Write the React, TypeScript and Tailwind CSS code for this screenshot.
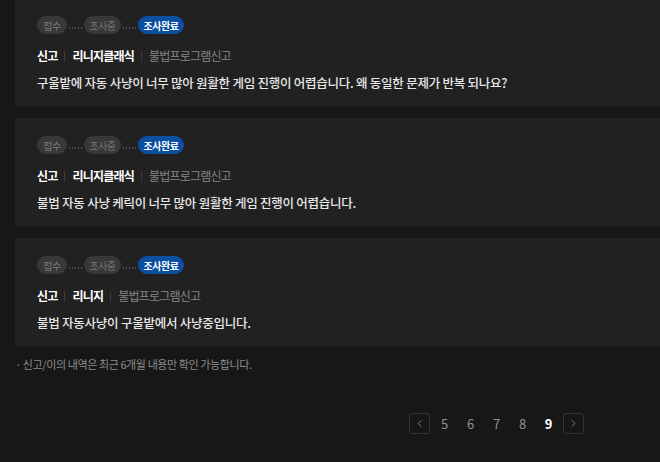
import React from 'react';
import { ChevronLeft, ChevronRight } from 'lucide-react';

interface Report {
    game: string;
    category: string;
    content: string;
}

const reports: Report[] = [
    { game: '리니지클래식', category: '불법프로그램신고', content: '구울밭에 자동 사냥이 너무 많아 원활한 게임 진행이 어렵습니다. 왜 동일한 문제가 반복 되나요?' },
    { game: '리니지클래식', category: '불법프로그램신고', content: '불법 자동 사냥 케릭이 너무 많아 원활한 게임 진행이 어렵습니다.' },
    { game: '리니지', category: '불법프로그램신고', content: '불법 자동사냥이 구울밭에서 사냥중입니다.' },
];

const Dots = () => (
    <span className="w-[17px] flex justify-center gap-[1.5px] translate-y-[3px]">
        {[0, 1, 2, 3, 4].map((i) => (
            <span key={i} className="w-[1.5px] h-[1.5px] bg-[#555]" />
        ))}
    </span>
);

const StepBadge = ({ label, width, active }: { label: string; width: string; active?: boolean }) => (
    <span
        className={
            active
                ? `${width} h-[18px] rounded-full bg-[#0b4ea2] text-white text-[10px] font-semibold tracking-[-0.5px] flex items-center justify-center`
                : `${width} h-[18px] rounded-full bg-[#383838] text-[#7a7a7a] text-[10px] tracking-[-0.5px] flex items-center justify-center`
        }
    >
        {label}
    </span>
);

const ReportCard = ({ report }: { report: Report }) => (
    <div className="bg-[#212121] pl-[22px] pt-[18px] pb-[15px]">
        <div className="flex items-center h-[18px]">
            <StepBadge label="접수" width="w-[30px]" />
            <Dots />
            <StepBadge label="조사중" width="w-[37px]" />
            <Dots />
            <StepBadge label="조사완료" width="w-[46px]" active />
        </div>
        <div className="mt-[13px] h-[18px] flex items-center text-[12px] tracking-[-0.8px]">
            <span className="font-bold text-white">신고</span>
            <span className="mx-[7px] w-px h-[11px] bg-[#3a3a3a]" />
            <span className="font-bold text-white">{report.game}</span>
            <span className="mx-[7px] w-px h-[11px] bg-[#3a3a3a]" />
            <span className="text-[#858585]">{report.category}</span>
        </div>
        <p className="mt-[9px] h-[18px] leading-[18px] text-[12.5px] font-medium text-[#e8e8e8] tracking-[-0.25px]">
            {report.content}
        </p>
    </div>
);

export default function App() {
    const pages = [5, 6, 7, 8, 9];
    const current = 9;

    return (
        <div
            className="w-[660px] h-[462px] overflow-hidden bg-[#171717]"
            style={{ fontFamily: '"Noto Sans CJK KR", "Noto Sans", sans-serif' }}
        >
            <div className="-mt-[2px] pl-[15px] flex flex-col gap-[11px]">
                {reports.map((r, i) => (
                    <ReportCard key={i} report={r} />
                ))}
            </div>

            <p className="mt-[9px] pl-[15px] h-[16px] leading-[16px] text-[11px] text-[#8c8c8c] tracking-[-0.4px]">
                · 신고/이의 내역은 최근 6개월 내용만 확인 가능합니다.
            </p>

            <div className="mt-[41px] flex justify-end pr-[76px] items-center gap-[3px]">
                <button className="w-[21px] h-[21px] rounded-[3px] border border-[#333] flex items-center justify-center text-[#9a9a9a]">
                    <ChevronLeft size={11} strokeWidth={1.75} />
                </button>
                {pages.map((p) => (
                    <span
                        key={p}
                        className={
                            p === current
                                ? 'w-[23px] text-center text-[13px] font-bold text-white'
                                : 'w-[23px] text-center text-[13px] text-[#8f8f8f]'
                        }
                    >
                        {p}
                    </span>
                ))}
                <button className="w-[21px] h-[21px] rounded-[3px] border border-[#333] flex items-center justify-center text-[#9a9a9a]">
                    <ChevronRight size={11} strokeWidth={1.75} />
                </button>
            </div>
        </div>
    );
}
